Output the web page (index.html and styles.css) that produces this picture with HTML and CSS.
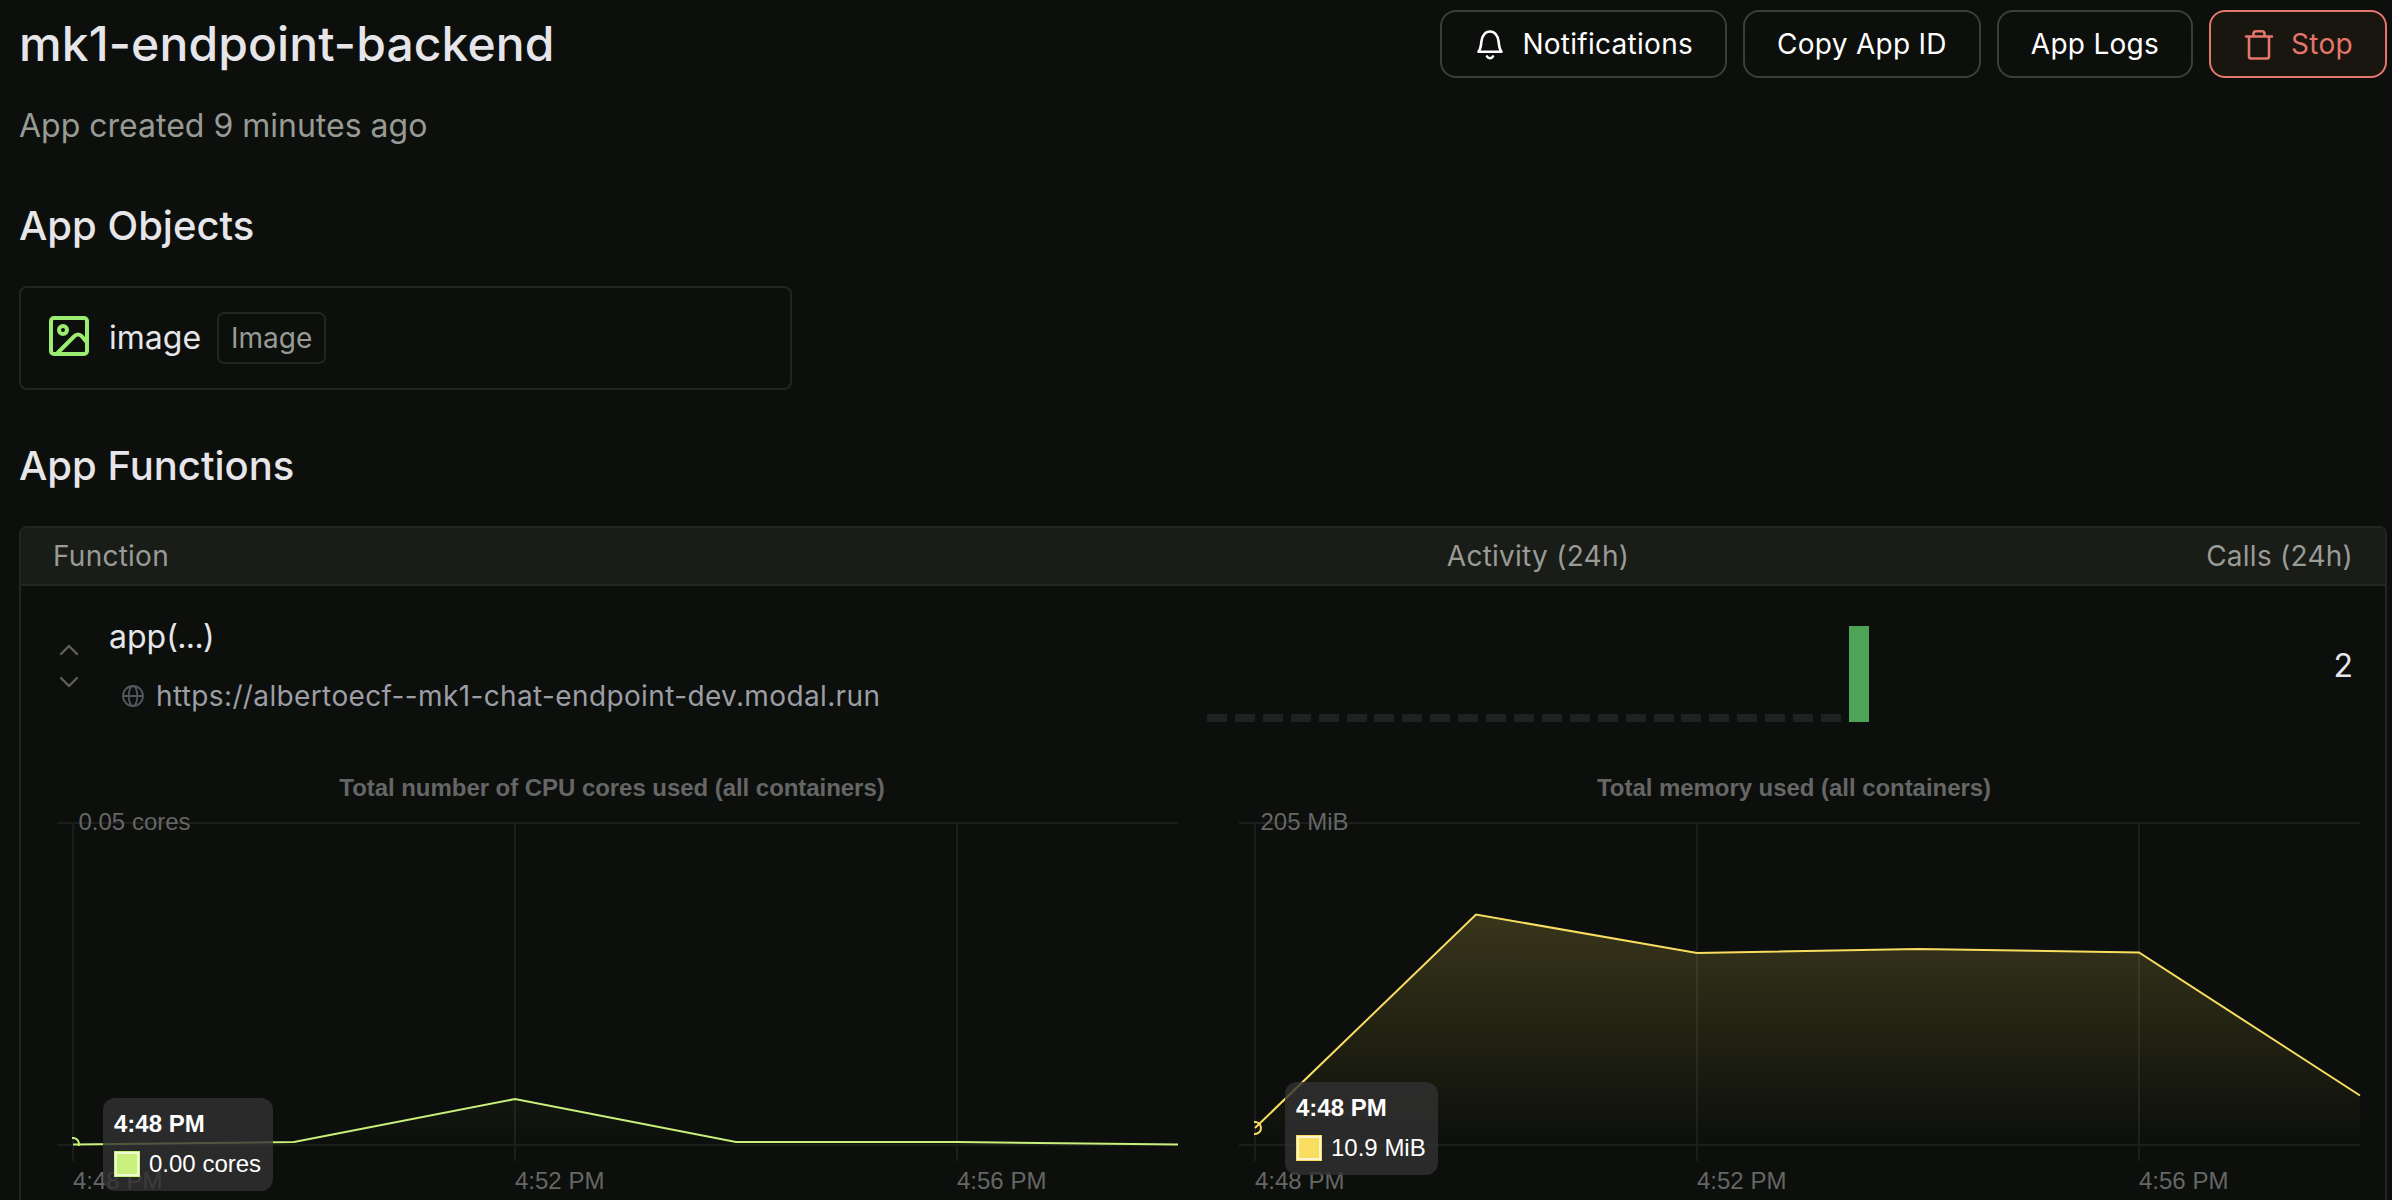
FILE: index.html
```html
<!DOCTYPE html>
<html lang="en">
<head>
<meta charset="utf-8">
<title>mk1-endpoint-backend</title>
<link rel="stylesheet" href="styles.css">
</head>
<body>
<main class="page">
  <header class="top">
    <h1 class="title">mk1-endpoint-backend</h1>
    <div class="actions">
      <button class="btn"><svg class="btn-icon" viewBox="0 0 32 32"><path d="M4.500 23.800H27.500C25 20.500 25 17 24.600 13.500C24 7.500 20.500 3.500 16 3.500S8 7.500 7.400 13.500C7 17 7 20.500 4.500 23.800Z"/><path d="M13 28.500Q16 32 19 28.500"/></svg><span>Notifications</span></button>
      <button class="btn">Copy App ID</button>
      <button class="btn">App Logs</button>
      <button class="btn btn-danger"><svg class="btn-icon" viewBox="0 0 32 32"><path d="M3 8.500H29M6 8.500V28.500Q6 30.500 8 30.500H24Q26 30.500 26 28.500V8.500M10.500 8.500V5.500Q10.500 3.200 13 3.200H19Q21.500 3.200 21.500 5.500V8.500"/></svg><span>Stop</span></button>
    </div>
  </header>
  <p class="created">App created 9 minutes ago</p>

  <h2 class="section">App Objects</h2>
  <div class="object-card">
    <svg class="image-icon" viewBox="0 0 40 40"><rect x="2" y="2" width="36" height="36" rx="3"/><circle cx="14" cy="14" r="4"/><path d="M8.500 37L25 20.500Q29 16.500 33 20.500L38 26.500"/></svg>
    <span>image</span>
    <span class="tag">Image</span>
  </div>

  <h2 class="section">App Functions</h2>
  <section class="table">
    <div class="row head">
      <span class="col-name">Function</span>
      <span class="col-activity">Activity (24h)</span>
      <span class="col-calls">Calls (24h)</span>
    </div>
    <div class="row entry">
      <div class="col-fn">
        <svg class="chevrons" viewBox="0 0 24 44"><path d="M4 10L12 2L20 10M4 34L12 42L20 34"/></svg>
        <div>
          <div class="fn-name">app<span class="args">(...)</span></div>
          <div class="fn-url"><svg class="globe" viewBox="0 0 22 22"><circle cx="11" cy="11" r="10"/><ellipse cx="11" cy="11" rx="4.300" ry="10"/><path d="M1 11H21"/></svg><span>https://albertoecf--mk1-chat-endpoint-dev.modal.run</span></div>
        </div>
      </div>
      <div class="bars">
        <i></i><i></i><i></i><i></i><i></i><i></i><i></i><i></i><i></i><i></i><i></i><i></i>
        <i></i><i></i><i></i><i></i><i></i><i></i><i></i><i></i><i></i><i></i><i></i><i class="full"></i>
      </div>
      <div class="col-calls calls-value">2</div>
    </div>
    <div class="charts">
      <div class="chart cpu">
        <svg class="plot" viewBox="0 0 1182 456">
          <defs>
            <linearGradient id="cpu-fill" gradientUnits="userSpaceOnUse" x1="0" y1="79" x2="0" y2="401"><stop offset="0" stop-color="#c8f07a" stop-opacity=".26"/><stop offset="1" stop-color="#c8f07a" stop-opacity="0"/></linearGradient>
            <clipPath id="cpu-area"><rect x="51" y="79" width="1106" height="323"/></clipPath>
          </defs>
          <path class="grid" d="M36 79H1157M36 401H1157M52 79V417M494 79V417M936 79V417"/>
          <path fill="url(#cpu-fill)" d="M52 400.500L273 398L494 355L715 397.500H936L1157 400.500V401H52Z"/>
          <path class="line" d="M52 400.500L273 398L494 355L715 398H936L1157 400.500"/>
          <circle class="line" clip-path="url(#cpu-area)" cx="52" cy="400" r="6"/>
          <text class="chart-title" x="591" y="52">Total number of CPU cores used (all containers)</text>
          <text x="57.500" y="86">0.05 cores</text>
          <text x="52" y="445">4:48 PM</text><text x="494" y="445">4:52 PM</text><text x="936" y="445">4:56 PM</text>
        </svg>
        <div class="tooltip"><b>4:48 PM</b><div class="value"><i class="swatch"></i>0.00 cores</div></div>
      </div>
      <div class="chart memory">
        <svg class="plot" viewBox="0 0 1182 456">
          <defs>
            <linearGradient id="mem-fill" gradientUnits="userSpaceOnUse" x1="0" y1="79" x2="0" y2="401"><stop offset="0" stop-color="#f9dd60" stop-opacity=".26"/><stop offset="1" stop-color="#f9dd60" stop-opacity="0"/></linearGradient>
            <clipPath id="mem-area"><rect x="51" y="79" width="1106" height="323"/></clipPath>
          </defs>
          <path class="grid" d="M36 79H1157M36 401H1157M52 79V417M494 79V417M936 79V417"/>
          <path fill="url(#mem-fill)" d="M52 384L273 170.500L494 209L715 205L936 208.500L1157 351.500V401H52Z"/>
          <path class="line" d="M52 384L273 170.500L494 209L715 205L936 208.500L1157 351.500"/>
          <circle class="line" clip-path="url(#mem-area)" cx="52" cy="384" r="6"/>
          <text class="chart-title" x="591" y="52">Total memory used (all containers)</text>
          <text x="57.500" y="86">205 MiB</text>
          <text x="52" y="445">4:48 PM</text><text x="494" y="445">4:52 PM</text><text x="936" y="445">4:56 PM</text>
        </svg>
        <div class="tooltip"><b>4:48 PM</b><div class="value"><i class="swatch"></i>10.9 MiB</div></div>
      </div>
    </div>
  </section>
</main>
</body>
</html>
```
FILE: styles.css
```css
* { box-sizing: border-box; }
body {
  margin: 0;
  background: #0c0f0b;
  color: #e6e6ea;
  font-family: Inter, sans-serif;
  font-size: 32px;
  line-height: 48px;
}
svg { fill: none; flex: none; display: block; }
.page {
  height: 1200px;
  overflow: hidden;
  padding: 10px 5px 0 19px;
}

.top { display: flex; justify-content: space-between; align-items: center; }
.title { margin: 0; font-size: 48px; font-weight: 500; line-height: 68px; letter-spacing: .12px; }
.actions { display: flex; gap: 16px; }
.btn {
  display: flex;
  align-items: center;
  gap: 16px;
  height: 68px;
  padding: 0 32px;
  border: 2px solid #3c3e3b;
  border-radius: 16px;
  background: none;
  color: #fff;
  font: 28px/40px Inter, sans-serif;
  letter-spacing: .28px;
}
.btn-icon { width: 32px; height: 32px; stroke: currentColor; stroke-width: 2.6; stroke-linecap: round; stroke-linejoin: round; }
.btn-danger { color: #e5766c; border-color: #e5766c; background: #19150f; }

.created { margin: 24px 0 0; color: #989a96; }
.section { margin: 48px 0 32px; font-size: 40px; line-height: 56px; font-weight: 500; }

.object-card {
  display: flex;
  align-items: center;
  width: 773px;
  height: 104px;
  padding: 0 28px;
  border: 2px solid #232522;
  border-radius: 8px;
}
.image-icon { width: 40px; height: 40px; margin: -4px 20px 0 0; stroke: #9cec71; stroke-width: 4; }
.tag {
  height: 52px;
  margin-left: 16px;
  padding: 0 12px;
  border: 2px solid #232522;
  border-radius: 7px;
  color: #989a96;
  font-size: 28px;
}

.table { height: 700px; border: 2px solid #232522; border-radius: 8px; overflow: hidden; }
.row { display: grid; grid-template-columns: 1186px 662px 1fr; align-items: center; }
.head {
  height: 58px;
  border-bottom: 2px solid #232522;
  background: #1a1c18;
  color: #999b96;
  font-size: 28px;
  letter-spacing: .25px;
}
.col-name { padding-left: 32px; }
.col-activity { text-align: center; }
.col-calls { padding-right: 32px; text-align: right; }
.calls-value { padding-top: 2px; }
.entry { height: 158px; }
.col-fn { display: flex; align-items: center; gap: 28px; padding-left: 36px; }
.chevrons { width: 24px; height: 44px; margin-top: 2px; stroke: #5f5f5e; stroke-width: 2.4; stroke-linecap: round; stroke-linejoin: round; }
.args { letter-spacing: -.6px; }
.fn-url { display: flex; align-items: center; gap: 12px; height: 42px; margin-top: 14px; padding-left: 13px; color: #9d9da6; font-size: 28px; letter-spacing: .37px; }
.globe { width: 22px; height: 22px; stroke: #55555d; stroke-width: 1.8; }

.bars { display: flex; align-items: flex-end; justify-content: space-between; height: 96px; margin-top: 18px; }
.bars i { width: 20px; height: 8px; background: #202122; }
.bars .full { height: 96px; background: #4da457; }

.charts { display: grid; grid-template-columns: 1fr 1fr; font-family: "Liberation Sans", sans-serif; }
.chart { position: relative; }
.cpu { --series: #c8f07a; }
.memory { --series: #f9dd60; }
.plot { width: 100%; height: 456px; fill: #666; font-size: 24px; }
.chart-title { font-weight: 700; text-anchor: middle; letter-spacing: -.05px; }
.grid { stroke: #1c1e1b; stroke-width: 2; }
.line { fill: none; stroke: var(--series); stroke-width: 2; }

.tooltip {
  position: absolute;
  left: 82px;
  top: 354px;
  height: 93px;
  padding: 12px 12px 12px 11px;
  border-radius: 12px;
  background: rgba(50, 49, 50, .8);
  color: #fff;
  font-size: 24px;
  line-height: 28px;
  white-space: nowrap;
}
.memory .tooltip { top: 338px; }
.tooltip b { display: block; }
.value { display: flex; align-items: center; gap: 9px; margin-top: 12px; }
.swatch { width: 26px; height: 26px; border: 1.5px solid var(--series); background: var(--series); box-shadow: inset 0 0 0 2px rgba(255, 255, 255, .7); }
```
